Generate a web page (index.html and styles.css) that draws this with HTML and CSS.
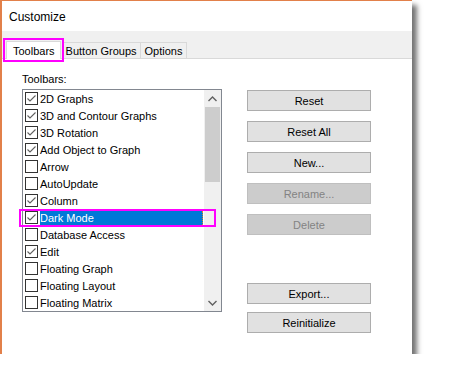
FILE: index.html
```html
<!DOCTYPE html>
<html lang="en">
<head>
  <meta charset="UTF-8">
  <title>Customize</title>
  <link rel="stylesheet" href="styles.css">
</head>
<body>

  <div class="window">
    <div class="title">Customize</div>

    <div class="tabs">
      <div class="tab active">Toolbars</div>
      <div class="tab">Button Groups</div>
      <div class="tab">Options</div>
    </div>

    <div class="page">
      <div class="left">
        <div class="label">Toolbars:</div>
        <div class="list">
          <div class="rows">
            <div class="row"><span class="box checked"></span><span class="text">2D Graphs</span></div>
            <div class="row"><span class="box checked"></span><span class="text">3D and Contour Graphs</span></div>
            <div class="row"><span class="box checked"></span><span class="text">3D Rotation</span></div>
            <div class="row"><span class="box checked"></span><span class="text">Add Object to Graph</span></div>
            <div class="row"><span class="box"></span><span class="text">Arrow</span></div>
            <div class="row"><span class="box"></span><span class="text">AutoUpdate</span></div>
            <div class="row"><span class="box checked"></span><span class="text">Column</span></div>
            <div class="row selected"><span class="box checked"></span><span class="text">Dark Mode</span><span class="mark"></span></div>
            <div class="row"><span class="box"></span><span class="text">Database Access</span></div>
            <div class="row"><span class="box checked"></span><span class="text">Edit</span></div>
            <div class="row"><span class="box"></span><span class="text">Floating Graph</span></div>
            <div class="row"><span class="box"></span><span class="text">Floating Layout</span></div>
            <div class="row"><span class="box"></span><span class="text">Floating Matrix</span></div>
          </div>
          <div class="scrollbar">
            <div class="arrow">
              <svg width="9" height="6" viewBox="0 0 9 6"><path d="M0.5 5 L4.5 1 L8.5 5" fill="none" stroke="#606060" stroke-width="1.4"/></svg>
            </div>
            <div class="thumb"></div>
            <div class="track"></div>
            <div class="arrow">
              <svg width="9" height="6" viewBox="0 0 9 6"><path d="M0.5 1 L4.5 5 L8.5 1" fill="none" stroke="#606060" stroke-width="1.4"/></svg>
            </div>
          </div>
        </div>
      </div>

      <div class="right">
        <button class="btn">Reset</button>
        <button class="btn">Reset All</button>
        <button class="btn">New...</button>
        <button class="btn" disabled>Rename...</button>
        <button class="btn" disabled>Delete</button>
        <button class="btn export">Export...</button>
        <button class="btn">Reinitialize</button>
      </div>
    </div>
  </div>

</body>
</html>
```

FILE: styles.css
```css
body {
  margin: 0;
  padding: 0;
  background: #ffffff;
  font-family: "Liberation Sans", Arial, sans-serif;
  font-size: 11px;
  color: #000000;
}

.window {
  width: 410px;
  height: 353px;
  background: #ffffff;
  border-top: 1px solid #e2804a;
  border-left: 2px solid #e2804a;
  box-shadow: 5px 5px 5px rgba(0, 0, 0, 0.55);
  display: flex;
  flex-direction: column;
}

.title {
  height: 30px;
  box-sizing: border-box;
  padding: 9px 0 0 7px;
  font-size: 12px;
  line-height: 14px;
}

.tabs {
  height: 27px;
  background: #f0f0f0;
  border-bottom: 1px solid #d9d9d9;
  display: flex;
  align-items: flex-end;
  padding-left: 5px;
}
.tab {
  height: 16px;
  box-sizing: border-box;
  border: 1px solid #d9d9d9;
  border-bottom: none;
  background: #f0f0f0;
  padding: 1px 3px 0 3px;
  line-height: 14px;
  margin-left: -1px;
}
.tab:last-child {
  padding: 1px 4px 0 4px;
}
.tab.active {
  height: 18px;
  margin-bottom: -1px;
  background: #ffffff;
  padding: 2px 5px 0 6px;
  margin-right: 2px;
  outline: 2px solid #ff00ff;
  outline-offset: 1px;
  position: relative;
  z-index: 1;
}

.page {
  flex: 1;
  display: flex;
  padding: 14px 0 0 20px;
}

.label {
  line-height: 13px;
  margin-bottom: 3px;
}

.list {
  width: 198px;
  height: 221px;
  border: 1px solid #828790;
  display: flex;
}
.rows {
  flex: 1;
}
.row {
  height: 17px;
  display: flex;
  align-items: center;
  padding-left: 2px;
  position: relative;
}
.box {
  width: 11px;
  height: 11px;
  border: 1px solid #333333;
  background: #ffffff;
  margin-right: 2px;
  flex-shrink: 0;
}
.box.checked {
  background: #ffffff url("data:image/svg+xml;utf8,<svg xmlns='http://www.w3.org/2000/svg' width='11' height='11'><path d='M1.5 5.5 L4 8 L9.5 2.5' fill='none' stroke='%23606060' stroke-width='1.1'/></svg>") no-repeat center;
}
.text {
  line-height: 14px;
  white-space: nowrap;
}
.row.selected .text {
  flex: 1;
  background: #0078d7;
  color: #ffffff;
  border-right: 1px dotted #d08a2c;
}
.mark {
  position: absolute;
  left: -4px;
  right: -13px;
  top: 0px;
  bottom: -1px;
  border: 2px solid #ff00ff;
}

.scrollbar {
  width: 17px;
  background: #f0f0f0;
  display: flex;
  flex-direction: column;
  margin-left: 1px;
}
.arrow {
  height: 17px;
  display: flex;
  align-items: center;
  justify-content: center;
}
.thumb {
  height: 75px;
  background: #cdcdcd;
  margin: 0 1px;
}
.track {
  flex: 1;
}

.right {
  display: flex;
  flex-direction: column;
  margin-left: 25px;
  padding-top: 17px;
}
.btn {
  width: 124px;
  height: 21px;
  margin-bottom: 10px;
  background: #e1e1e1;
  border: 1px solid #adadad;
  font-family: "Liberation Sans", Arial, sans-serif;
  font-size: 11px;
  color: #000000;
  padding: 0;
}
.btn:disabled {
  background: #cccccc;
  border-color: #bfbfbf;
  color: #838383;
}
.btn.export {
  margin-top: 38px;
  margin-bottom: 8px;
}
```
